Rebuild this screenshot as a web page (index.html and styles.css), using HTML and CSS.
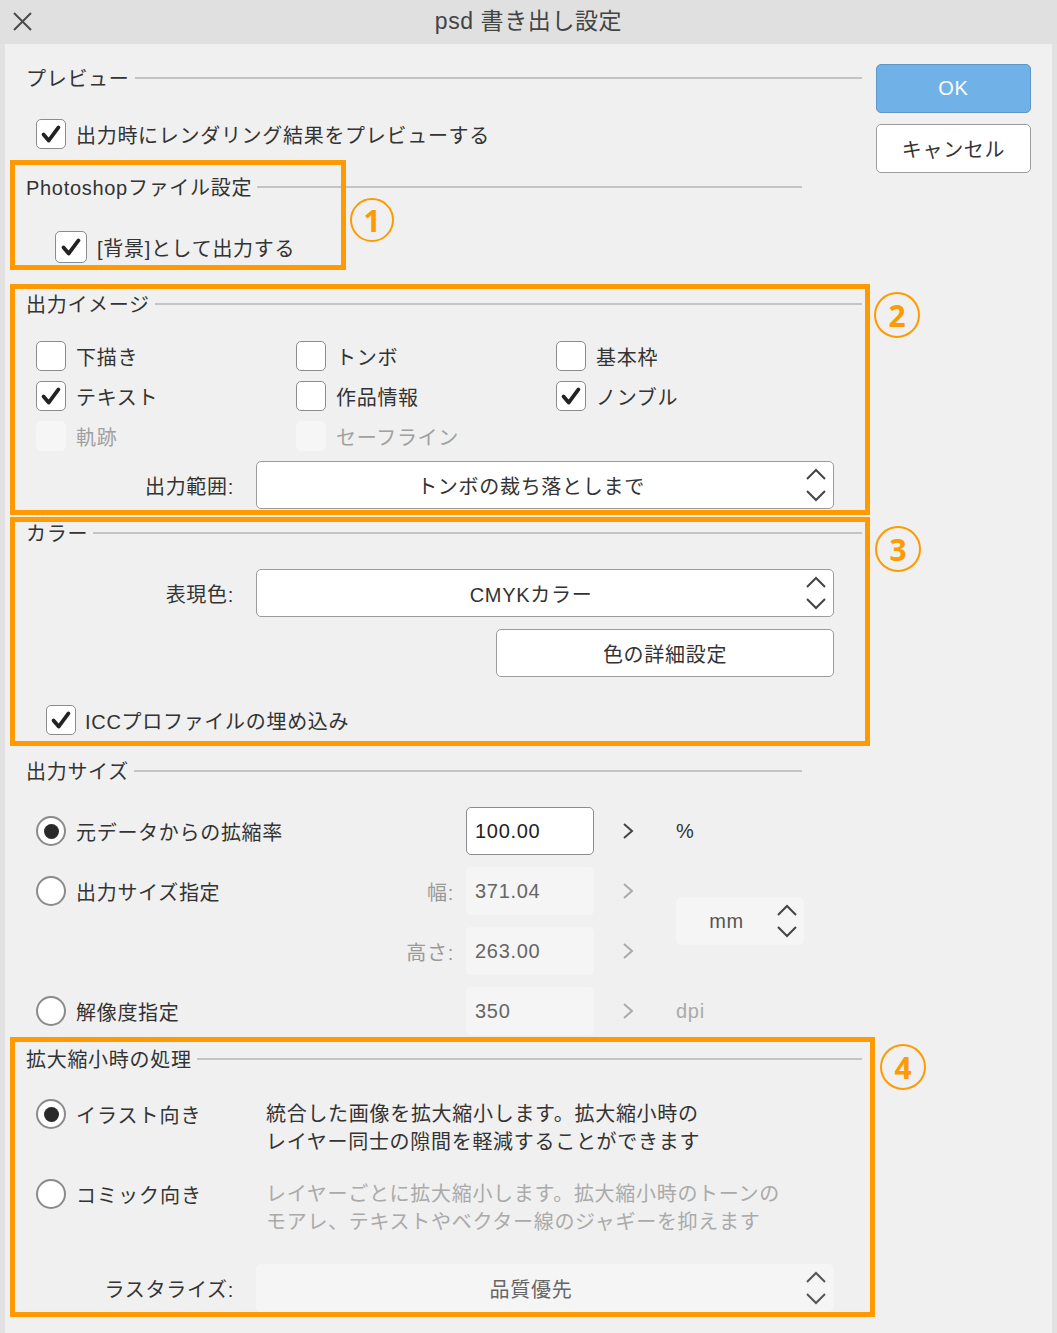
FILE: index.html
```html
<!DOCTYPE html>
<html lang="ja">
<head>
<meta charset="utf-8">
<title>psd 書き出し設定</title>
<link rel="stylesheet" href="styles.css">
</head>
<body>
<div class="titlebar">
  <div class="tb-left">
    <svg class="close" viewBox="0 0 44 40" width="44" height="40"><path d="M14 11 L31 28 M31 11 L14 28"/></svg>
  </div>
  <div class="title">psd 書き出し設定</div>
  <div></div>
</div>

<div class="panel">
  <div class="main">

    <section class="sec sec-preview">
      <div class="head"><span>プレビュー</span><i></i></div>
      <div class="chk-row row-preview">
        <span class="cb"><svg viewBox="0 0 30 30"><path d="M7 15.5 L12.5 22 L23 8"/></svg></span>
        <span>出力時にレンダリング結果をプレビューする</span>
      </div>
    </section>

    <section class="sec sec-ps">
      <div class="head"><span>Photoshopファイル設定</span><i></i></div>
      <div class="chk-row row-bg">
        <span class="cb big"><svg viewBox="0 0 30 30"><path d="M7 15.5 L12.5 22 L23 8"/></svg></span>
        <span>[背景]として出力する</span>
      </div>
      <div class="mark-box"></div>
      <div class="badge b1">1</div>
    </section>

    <section class="sec hl sec-image">
      <div class="head"><span>出力イメージ</span><i></i></div>
      <div class="chk-grid">
        <div class="chk-row"><span class="cb"></span><span>下描き</span></div>
        <div class="chk-row"><span class="cb"></span><span>トンボ</span></div>
        <div class="chk-row"><span class="cb"></span><span>基本枠</span></div>
        <div class="chk-row"><span class="cb"><svg viewBox="0 0 30 30"><path d="M7 15.5 L12.5 22 L23 8"/></svg></span><span>テキスト</span></div>
        <div class="chk-row"><span class="cb"></span><span>作品情報</span></div>
        <div class="chk-row"><span class="cb"><svg viewBox="0 0 30 30"><path d="M7 15.5 L12.5 22 L23 8"/></svg></span><span>ノンブル</span></div>
        <div class="chk-row dis"><span class="cb"></span><span>軌跡</span></div>
        <div class="chk-row dis"><span class="cb"></span><span>セーフライン</span></div>
      </div>
      <div class="field-row range-row">
        <span class="flabel">出力範囲:</span>
        <div class="select">
          <span class="sel-text">トンボの裁ち落としまで</span>
          <svg class="updown" viewBox="0 0 20 34"><path d="M1 11 L10 2 L19 11 M1 23 L10 32 L19 23"/></svg>
        </div>
      </div>
      <div class="badge b2">2</div>
    </section>

    <section class="sec hl sec-color">
      <div class="head"><span>カラー</span><i></i></div>
      <div class="field-row color-row">
        <span class="flabel">表現色:</span>
        <div class="select">
          <span class="sel-text">CMYKカラー</span>
          <svg class="updown" viewBox="0 0 20 34"><path d="M1 11 L10 2 L19 11 M1 23 L10 32 L19 23"/></svg>
        </div>
      </div>
      <div class="field-row detail-row">
        <span class="flabel"></span>
        <div class="btn-detail">色の詳細設定</div>
      </div>
      <div class="chk-row row-icc">
        <span class="cb"><svg viewBox="0 0 30 30"><path d="M7 15.5 L12.5 22 L23 8"/></svg></span>
        <span>ICCプロファイルの埋め込み</span>
      </div>
      <div class="badge b3">3</div>
    </section>

    <section class="sec sec-size">
      <div class="head"><span>出力サイズ</span><i></i></div>
      <div class="size-grid">
        <div class="c1 r1"><span class="radio on"></span><span>元データからの拡縮率</span></div>
        <div class="inp active r1c2">100.00</div>
        <div class="arr r1c3"><svg viewBox="0 0 12 18"><path d="M2 2 L10 9 L2 16"/></svg></div>
        <div class="unit r1c4">%</div>

        <div class="c1 r2"><span class="radio"></span><span>出力サイズ指定</span><span class="sublabel">幅:</span></div>
        <div class="inp r2c2">371.04</div>
        <div class="arr dim r2c3"><svg viewBox="0 0 12 18"><path d="M2 2 L10 9 L2 16"/></svg></div>

        <div class="c1 r3"><span class="sublabel">高さ:</span></div>
        <div class="inp r3c2">263.00</div>
        <div class="arr dim r3c3"><svg viewBox="0 0 12 18"><path d="M2 2 L10 9 L2 16"/></svg></div>

        <div class="select mm">
          <span class="sel-text">mm</span>
          <svg class="updown" viewBox="0 0 20 34"><path d="M1 11 L10 2 L19 11 M1 23 L10 32 L19 23"/></svg>
        </div>

        <div class="c1 r4"><span class="radio"></span><span>解像度指定</span></div>
        <div class="inp r4c2">350</div>
        <div class="arr dim r4c3"><svg viewBox="0 0 12 18"><path d="M2 2 L10 9 L2 16"/></svg></div>
        <div class="unit dim r4c4">dpi</div>
      </div>
    </section>

    <section class="sec hl sec-scale">
      <div class="head"><span>拡大縮小時の処理</span><i></i></div>
      <div class="opt-row opt1">
        <div class="opt-label"><span class="radio on"></span><span>イラスト向き</span></div>
        <div class="desc">統合した画像を拡大縮小します。拡大縮小時の<br>レイヤー同士の隙間を軽減することができます</div>
      </div>
      <div class="opt-row opt2">
        <div class="opt-label"><span class="radio"></span><span>コミック向き</span></div>
        <div class="desc dim">レイヤーごとに拡大縮小します。拡大縮小時のトーンの<br>モアレ、テキストやベクター線のジャギーを抑えます</div>
      </div>
      <div class="field-row raster-row">
        <span class="flabel">ラスタライズ:</span>
        <div class="select disabled">
          <span class="sel-text">品質優先</span>
          <svg class="updown" viewBox="0 0 20 34"><path d="M1 11 L10 2 L19 11 M1 23 L10 32 L19 23"/></svg>
        </div>
      </div>
      <div class="badge b4">4</div>
    </section>

  </div>

  <div class="side">
    <div class="btn ok">OK</div>
    <div class="btn cancel">キャンセル</div>
  </div>
</div>
</body>
</html>
```

FILE: styles.css
```css
* { box-sizing: border-box; }

body {
  margin: 0;
  background: #e2e2e2;
  font-family: "Liberation Sans", "Noto Sans CJK JP", sans-serif;
  font-size: 20px;
  color: #333;
  letter-spacing: 0.7px;
}

/* title bar */
.titlebar {
  height: 44px;
  background: #e0e0e0;
  display: grid;
  grid-template-columns: 1fr auto 1fr;
  align-items: center;
}
.tb-left { display: flex; align-items: center; }
.close { display: block; }
.close path { stroke: #4a4a4a; stroke-width: 2; fill: none; }
.title {
  font-size: 23px;
  color: #444;
  letter-spacing: 0.6px;
  margin-top: -6px;
}

/* panel */
.panel {
  margin: 0 5px;
  background: #f0f0f0;
  height: 1289px;
  display: flex;
}
.main {
  width: 871px;
  padding: 8px 0 0 5px;
  flex: none;
}
.side {
  padding-top: 20px;
  display: flex;
  flex-direction: column;
  gap: 11px;
}
.btn {
  width: 155px;
  height: 49px;
  border-radius: 5px;
  display: flex;
  align-items: center;
  justify-content: center;
  font-size: 20px;
}
.btn.ok { background: #70b1e8; border: 1px solid #5d95c6; color: #fff; }
.btn.cancel { background: #fff; border: 1px solid #9c9c9c; color: #333; }

/* sections */
.sec {
  position: relative;
  width: 860px;
  border: 5px solid transparent;
  padding: 0 3px 0 11px;
}
.sec.hl { border-color: #ff9a00; }

.head {
  display: flex;
  align-items: center;
  height: 24px;
  line-height: 24px;
}
.head span { white-space: nowrap; }
.head i {
  flex: 1;
  height: 2px;
  background: #c4c4c4;
  margin-left: 5px;
  margin-top: -2px;
}

.sec-preview { height: 108px; padding-top: 10px; }
.sec-ps { height: 110px; padding-top: 11px; padding-right: 63px; margin-bottom: 14px; }
.sec-image { height: 231px; padding-top: 4px; margin-bottom: 2px; }
.sec-color { height: 229px; padding-top: 0; }
.sec-size { height: 291px; padding-top: 9px; padding-right: 63px; }
.sec-scale { width: 865px; height: 280px; padding-top: 6px; padding-right: 8px; }

/* checkboxes */
.chk-row {
  display: flex;
  align-items: center;
  gap: 10px;
  height: 30px;
  white-space: nowrap;
}
.cb {
  width: 30px;
  height: 30px;
  flex: none;
  background: #fff;
  border: 1px solid #8c8c8c;
  border-radius: 5px;
  display: flex;
  align-items: center;
  justify-content: center;
}
.cb.big { width: 32px; height: 32px; }
.cb svg { width: 28px; height: 28px; display: block; }
.cb path {
  fill: none;
  stroke: #222;
  stroke-width: 4;
  stroke-linecap: round;
  stroke-linejoin: round;
}
.chk-row.dis { color: #a0a0a0; }
.chk-row.dis .cb { background: #f6f6f6; border-color: #f6f6f6; }

.row-preview { margin: 28px 0 0 10px; }
.row-bg { margin: 31px 0 0 29px; height: 32px; }

.mark-box {
  position: absolute;
  left: -5px;
  top: -5px;
  width: 336px;
  height: 110px;
  border: 5px solid #ff9a00;
}

.chk-grid {
  margin: 24px 0 0 10px;
  display: grid;
  grid-template-columns: 260px 260px 260px;
  row-gap: 10px;
}

/* field rows */
.field-row {
  display: flex;
  align-items: center;
  gap: 22px;
}
.flabel {
  width: 208px;
  flex: none;
  text-align: right;
  white-space: nowrap;
}
.range-row { margin-top: 10px; }
.color-row { margin-top: 23px; }
.detail-row { margin-top: 12px; }
.raster-row { margin-top: 28px; }

.select {
  width: 578px;
  height: 48px;
  background: #fff;
  border: 1px solid #9c9c9c;
  border-radius: 5px;
  display: flex;
  align-items: center;
}
.sel-text {
  flex: 1;
  text-align: center;
  white-space: nowrap;
}
.updown {
  width: 20px;
  height: 34px;
  flex: none;
  margin: 0 7px 0 1px;
  display: block;
}
.updown path {
  fill: none;
  stroke: #444;
  stroke-width: 2;
  stroke-linejoin: miter;
}
.select.disabled {
  background: #f5f5f5;
  border-color: #f5f5f5;
  color: #666;
}
.select.disabled .updown path { stroke: #555; }

.btn-detail {
  margin-left: 240px;
  width: 338px;
  height: 48px;
  background: #fff;
  border: 1px solid #9c9c9c;
  border-radius: 5px;
  display: flex;
  align-items: center;
  justify-content: center;
}

.row-icc { margin: 28px 0 0 20px; gap: 9px; }

/* size grid */
.size-grid {
  margin: 23px 0 0 10px;
  display: grid;
  grid-template-columns: 430px 128px 82px 128px;
  grid-template-rows: 48px 48px 48px 48px;
  row-gap: 12px;
}
.c1 {
  display: flex;
  align-items: center;
  gap: 10px;
  padding-right: 12px;
  white-space: nowrap;
}
.r1 { grid-row: 1; grid-column: 1; }
.r2 { grid-row: 2; grid-column: 1; }
.r3 { grid-row: 3; grid-column: 1; }
.r4 { grid-row: 4; grid-column: 1; }
.r1c2 { grid-row: 1; grid-column: 2; }
.r2c2 { grid-row: 2; grid-column: 2; }
.r3c2 { grid-row: 3; grid-column: 2; }
.r4c2 { grid-row: 4; grid-column: 2; }
.r1c3 { grid-row: 1; grid-column: 3; }
.r2c3 { grid-row: 2; grid-column: 3; }
.r3c3 { grid-row: 3; grid-column: 3; }
.r4c3 { grid-row: 4; grid-column: 3; }
.r1c4 { grid-row: 1; grid-column: 4; }
.r4c4 { grid-row: 4; grid-column: 4; }
.sublabel { margin-left: auto; color: #999; }

.radio {
  width: 30px;
  height: 30px;
  flex: none;
  border-radius: 50%;
  background: #fff;
  border: 2px solid #8a8a8a;
  display: flex;
  align-items: center;
  justify-content: center;
}
.radio.on::after {
  content: "";
  width: 15px;
  height: 15px;
  border-radius: 50%;
  background: #2a2a2a;
}

.inp {
  height: 48px;
  border-radius: 5px;
  background: #f5f5f5;
  color: #666;
  padding-left: 9px;
  display: flex;
  align-items: center;
}
.inp.active { background: #fff; border: 1px solid #8c8c8c; color: #222; padding-left: 8px; }

.arr {
  display: flex;
  align-items: center;
  padding-left: 28px;
}
.arr svg { width: 12px; height: 18px; display: block; }
.arr path { fill: none; stroke: #444; stroke-width: 2; }
.arr.dim path { stroke: #aaa; }

.unit { display: flex; align-items: center; padding-left: 0; }
.unit.dim { color: #aaa; }

.select.mm {
  grid-column: 4;
  grid-row: 2 / 4;
  align-self: center;
  width: 128px;
  background: #f5f5f5;
  border-color: #f5f5f5;
  color: #555;
}
.select.mm .updown { margin-right: 6px; }

/* scale options */
.opt-row { display: flex; align-items: flex-start; }
.opt1 { margin: 27px 0 0 10px; }
.opt2 { margin: 23px 0 0 10px; }
.opt-label {
  width: 230px;
  flex: none;
  display: flex;
  align-items: center;
  gap: 10px;
  height: 30px;
  letter-spacing: 1px;
}
.desc {
  line-height: 28px;
  padding-top: 1px;
  white-space: nowrap;
}
.desc.dim { color: #aaa; }

/* annotation badges */
.badge {
  position: absolute;
  width: 46px;
  height: 46px;
  border: 2px solid #ff9a00;
  border-radius: 50%;
  color: #ff9a00;
  font-family: "Noto Sans", "DejaVu Sans", sans-serif;
  font-weight: bold;
  font-size: 30px;
  display: flex;
  align-items: center;
  justify-content: center;
  letter-spacing: 0;
}
.b1 { left: 335px; top: 33px; width: 44px; height: 44px; }
.b2 { left: 859px; top: 3px; }
.b3 { left: 860px; top: 4px; }
.b4 { left: 865px; top: 2px; }
```
